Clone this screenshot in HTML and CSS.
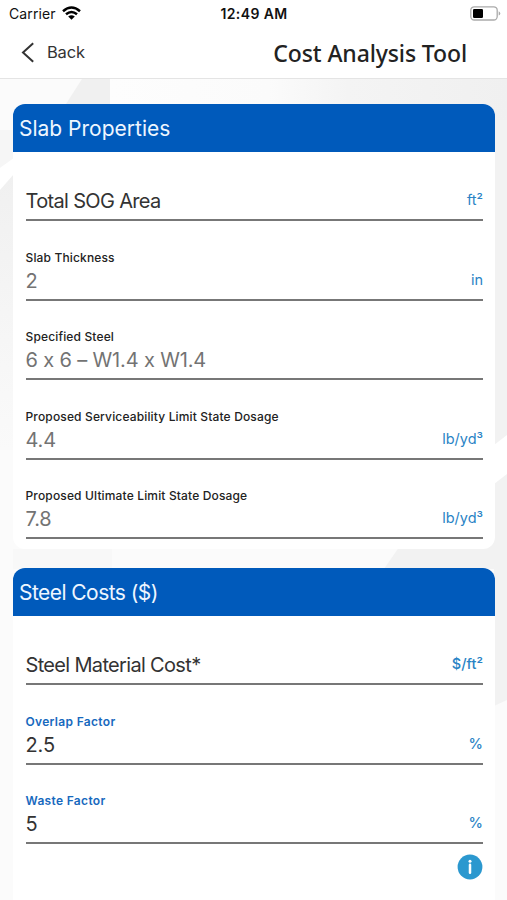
FILE: index.html
```html
<!DOCTYPE html>
<html lang="en">
<head>
<meta charset="utf-8">
<title>Cost Analysis Tool</title>
<link rel="stylesheet" href="styles.css">
</head>
<body>
<div class="screen">
  <header class="top">
    <div class="status">
      <div class="carrier"><span>Carrier</span>
        <svg width="19" height="14" viewBox="0 0 19 14"><g fill="none" stroke="#000" stroke-width="2.5"><path d="M1 5.2Q9.500-2.200 18 5.200"/><path d="M4 8.300Q9.500 3.600 15 8.300"/></g><path d="M6.200 10.500Q9.500 7.800 12.800 10.500L9.500 13.800Z"/></svg>
      </div>
      <div class="time">12:49 AM</div>
      <svg class="battery" width="31" height="15" viewBox="0 0 31 15"><rect x=".8" y=".8" width="26.400" height="13.200" rx="3.500" fill="#fff" stroke="#aaa" stroke-width="1.300"/><rect x="3" y="3" width="10" height="9" rx="1.200"/><path d="M28.700 5.200Q30.300 6 30.300 7.400T28.700 9.600Z" fill="#aaa"/></svg>
    </div>
    <nav class="nav">
      <a class="back"><svg width="14" height="21" viewBox="0 0 14 21"><path d="M12.200 1.200 2 10.500 12.200 19.800" fill="none" stroke="#333" stroke-width="2"/></svg><span>Back</span></a>
      <h1>Cost Analysis Tool</h1>
    </nav>
  </header>
  <main class="content">
    <svg class="backdrop" width="507" height="821" viewBox="0 79 507 821">
      <defs>
        <linearGradient id="sheen"><stop stop-color="#fdfdfd"/><stop offset=".4" stop-color="#fbfbfb"/><stop offset=".6" stop-color="#f4f4f4"/><stop offset="1" stop-color="#f0f0f0"/></linearGradient>
        <linearGradient id="fade" x2="0" y2="1"><stop stop-color="#f0f0f0"/><stop offset="1" stop-color="#fafafa"/></linearGradient>
      </defs>
      <path fill="#fbfbfb" d="M0 79H507V900H0Z"/>
      <path fill="url(#sheen)" d="M110 79H507V200H110Z"/>
      <path fill="#f0f0f0" d="M82 79H110V104H66Z"/>
      <path fill="#f6f6f6" d="M0 130H14V158L0 168Z"/>
      <path fill="#fff" d="M0 168 14 158V174L0 190Z"/>
      <path fill="url(#fade)" d="M0 190 14 174V450H0Z"/>
      <path fill="#f2f2f2" d="M494 120H507V700L494 706Z"/>
      <path fill="#fff" d="M494 445 507 435V474L494 484Z"/>
      <path fill="#f8f8f8" d="M13 549H112V569H13Z"/>
      <path fill="#f2f2f2" d="M404 540H507V569H384Z"/>
    </svg>
    <section class="card">
      <h2>Slab Properties</h2>
      <div class="field"><div class="row"><span class="value dark name">Total SOG Area</span><span class="unit">ft²</span></div></div>
      <div class="field"><label>Slab Thickness</label><div class="row"><span class="value">2</span><span class="unit">in</span></div></div>
      <div class="field"><label>Specified Steel</label><div class="row"><span class="value">6 x 6 – W1.4 x W1.4</span></div></div>
      <div class="field"><label>Proposed Serviceability Limit State Dosage</label><div class="row"><span class="value">4.4</span><span class="unit">lb/yd³</span></div></div>
      <div class="field"><label>Proposed Ultimate Limit State Dosage</label><div class="row"><span class="value">7.8</span><span class="unit">lb/yd³</span></div></div>
    </section>
    <section class="card">
      <h2 class="tight">Steel Costs ($)</h2>
      <div class="field"><div class="row"><span class="value dark name">Steel Material Cost*</span><span class="unit medium">$/ft²</span></div></div>
      <div class="field"><label class="active">Overlap Factor</label><div class="row"><span class="value dark">2.5</span><span class="unit medium">%</span></div></div>
      <div class="field"><label class="active">Waste Factor</label><div class="row"><span class="value dark">5</span><span class="unit medium">%</span></div></div>
      <div class="help"><svg width="26" height="26" viewBox="0 0 26 26"><circle cx="13" cy="13" r="12.400" fill="#2b98cf"/><circle cx="13" cy="7.200" r="1.500" fill="#fff"/><path d="M13 10.700V18.700" stroke="#fff" stroke-width="2.500" stroke-linecap="round"/></svg></div>
    </section>
  </main>
</div>
</body>
</html>
```
FILE: styles.css
```css
* { box-sizing: border-box; }
body { margin: 0; font-family: Inter, "Liberation Sans", sans-serif; font-feature-settings: "calt" 0; color: #333; background: #fff; }
.screen { height: 900px; overflow: hidden; display: flex; flex-direction: column; }
.top { height: 79px; flex: none; background: #fff; border-bottom: 1px solid #e4e4e4; }
.status { height: 27px; display: grid; grid-template-columns: 1fr auto 1fr; align-items: center; padding: 0 6px 0 9px; color: #111; font-size: 14px; }
.carrier { display: flex; align-items: center; gap: 6px; letter-spacing: .1px; }
.carrier svg { margin-top: -2px; }
.time { font-weight: 600; letter-spacing: .4px; margin-left: -2px; }
.battery { justify-self: end; }
.nav { height: 50px; display: flex; align-items: center; justify-content: space-between; padding: 0 40px 0 21px; }
.back { display: flex; align-items: center; gap: 12px; font-size: 16.5px; letter-spacing: -.2px; }
h1 { margin: 2px 0 0; font: 500 23px/32px "Noto Sans", sans-serif; letter-spacing: -.12px; color: #222; white-space: nowrap; }
.content { position: relative; flex: 1; padding: 25px 12px 0 13px; display: flex; flex-direction: column; gap: 19px; overflow: hidden; }
.backdrop { position: absolute; top: 0; left: 0; }
.card { position: relative; flex: none; background: #fff; border-radius: 12px; overflow: hidden; height: 445px; }
h2 { margin: 0; height: 48px; padding: 0 6px; background: #005abb; color: #eef6ff; font-size: 21px; line-height: 49px; font-weight: 400; }
h2.tight { letter-spacing: -.55px; line-height: 50px; }
.field { height: 79.5px; margin: 0 12px 0 12.5px; border-bottom: 2px solid #777; display: flex; flex-direction: column; justify-content: flex-end; padding-bottom: 4px; }
h2 + .field { height: 69px; }
label { font-size: 12px; line-height: 16px; letter-spacing: .15px; color: #222; font-weight: 450; margin-bottom: 1px; }
label.active { color: #1769be; font-weight: 600; letter-spacing: .32px; }
.row { display: flex; align-items: center; justify-content: space-between; height: 28px; }
.value { font-size: 20px; line-height: 28px; color: #737373; letter-spacing: -.15px; }
.value.dark { color: #333; }
.value.name { letter-spacing: -.67px; }
.unit { font-size: 14.5px; line-height: 20px; color: #2983c5; margin-top: -2px; }
.unit.medium { font-weight: 500; }
.help { display: flex; justify-content: flex-end; padding: 10px 12px 0; }
```
